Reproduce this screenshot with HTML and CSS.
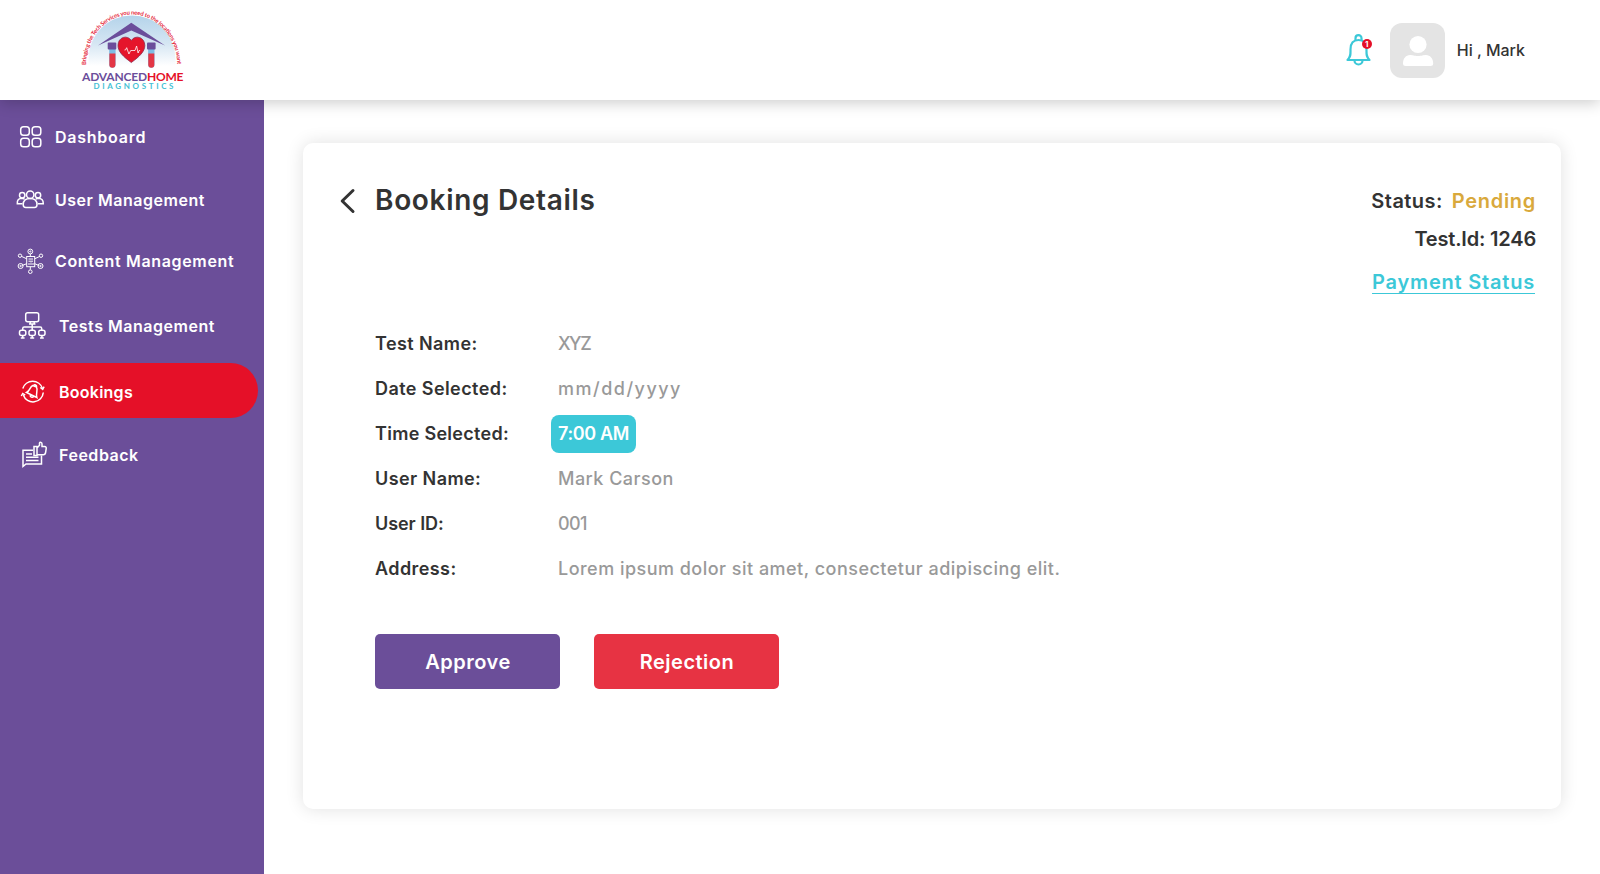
FILE: index.html
```html
<!DOCTYPE html>
<html lang="en">
<head>
<meta charset="utf-8">
<title>Booking Details</title>
<link rel="stylesheet" href="styles.css">
</head>
<body>
<header class="topbar">
  <svg class="logo" width="125" height="100" viewBox="70 0 125 100" role="img" aria-label="Advanced Home Diagnostics">
    <defs>
      <linearGradient id="sky" x1="0" y1="0" x2="0" y2="1"><stop offset="0" stop-color="#b4d3ea"/><stop offset=".55" stop-color="#d5e6f3"/><stop offset="1" stop-color="#fff"/></linearGradient>
      <path id="arc" d="M86 65 A45.600 50.500 0 0 1 177.200 65"/>
    </defs>
    <path d="M88.500 66 V59 A43.500 43.500 0 0 1 175.500 59 V66 Z" fill="url(#sky)"/>
    <text class="logo-motto"><textPath href="#arc" textLength="150">Bringing the Tech Services you need to the locations you want</textPath></text>
    <path d="M98 45.500 L131.300 22.700 L165 45.500 L131.300 30.500 Z" fill="#6b4e9b"/>
    <g>
      <path d="M109.200 49 h6.400 v15.500 a3.200 3.200 0 0 1 -6.400 0z" fill="#7ebce4"/>
      <path d="M109.400 53.500 h6 v11.200 a3 3 0 0 1 -6 0z" fill="#e33645"/>
      <rect x="107.700" y="42.400" width="8.600" height="7" rx="1" fill="#6b4e9b"/>
      <path d="M148.100 49 h6.400 v15.500 a3.200 3.200 0 0 1 -6.400 0z" fill="#7ebce4"/>
      <path d="M148.300 53.500 h6 v11.200 a3 3 0 0 1 -6 0z" fill="#e33645"/>
      <rect x="147" y="42.400" width="8.600" height="7" rx="1" fill="#6b4e9b"/>
    </g>
    <path d="M131.300 62.500 C123 56.500 118 51.500 118 45.500 C118 36.800 127.500 34.500 131.300 40.500 C135.100 34.500 144.800 36.800 144.800 45.500 C144.800 51.500 139.600 56.500 131.300 62.500Z" fill="#e5152b" stroke="#8d2a4c" stroke-width=".8"/>
    <path d="M124.500 50 h1 l1.200 -2.300 l2.200 6.300 l1.800 -3.500 h4.300 l1.600 -4.500 l1.500 7 l1 -2.500 h1" fill="none" stroke="#fff" stroke-width=".8"/>
    <text class="logo-name" x="82" y="81" textLength="101.500"><tspan fill="#6b4e9b">ADVANCED</tspan><tspan fill="#e51029">HOME</tspan></text>
    <text class="logo-sub" x="93.500" y="88.700" textLength="80">DIAGNOSTICS</text>
  </svg>
  <div class="account">
    <div class="bell">
      <svg width="26" height="32" viewBox="0 0 26 32" fill="none" stroke="#3cc8d8" stroke-width="2.200">
        <path d="M1.500 26 C5 22.500 4.500 20 4.500 15.500 C4.500 9 7.500 6 12.500 6 C17.500 6 20.500 9 20.500 15.500 C20.500 20 20 22.500 23.500 26 Z" stroke-linejoin="round"/>
        <path d="M9.500 6.500 V4.200 a3 3 0 0 1 6 0 V6.500"/>
        <path d="M8.500 26.500 a4 4 0 0 0 8 0"/>
      </svg>
      <span class="badge">1</span>
    </div>
    <div class="avatar">
      <svg width="55" height="55" viewBox="0 0 55 55" fill="#fff"><circle cx="28" cy="21.500" r="8.600"/><path d="M13 40.500 C13 35.500 16 32 20 32 C23 32 24 33 28 33 C32 33 33 32 36 32 C40 32 43.200 35.500 43.200 40.500 C43.200 42.200 42.200 43 40.500 43 H15.700 C14 43 13 42.200 13 40.500Z"/></svg>
    </div>
    <span class="greeting">Hi , Mark</span>
  </div>
</header>
<div class="shell">
  <nav class="sidebar">
    <a class="item dashboard">
      <svg width="30" height="30" viewBox="0 0 30 30"><rect x="5.700" y="4.700" width="8.600" height="8.600" rx="2.800"/><rect x="17.200" y="4.700" width="8.600" height="8.600" rx="2.800"/><rect x="5.700" y="16.200" width="8.600" height="8.600" rx="2.800"/><rect x="17.200" y="16.200" width="8.600" height="8.600" rx="2.800"/></svg>
      <span>Dashboard</span></a>
    <a class="item users">
      <svg width="30" height="30" viewBox="0 0 30 30"><circle cx="15.200" cy="9.700" r="3.700"/><circle cx="7.200" cy="10.200" r="2.700"/><circle cx="23" cy="10.200" r="2.700"/><path d="M8.200 19.500 C8.200 15.600 10.500 13.500 15.200 13.500 C19.900 13.500 22 15.600 22 19.500 C22 21.600 21.100 22.500 19.500 22.500 H10.800 C9.200 22.500 8.200 21.600 8.200 19.500Z"/><path d="M7.500 18.700 H2.300 C2 15 3.800 13.200 7.200 13.200 L9.500 14 M22.700 18.700 H28.300 C28.400 15 26.400 13.200 23 13.200 L20.800 14"/></svg>
      <span>User Management</span></a>
    <a class="item content">
      <svg class="fine" width="30" height="30" viewBox="0 0 30 30"><rect x="11.700" y="10.500" width="8" height="10.200"/><path d="M13.500 13 h4.500 M13.500 15.200 h4.500 M14 19 v-2 M16 19 v-2.500 M18 19 v-2 M15.300 8 v2.500 M15.300 20.700 v3 M6.800 10.500 l4.900 2.300 M24.500 10.500 l-4.800 2.300 M7.200 19.500 l4.500 -1.800 M24 19.500 l-4.300 -1.800"/><circle cx="15.300" cy="5.500" r="2.400"/><circle cx="15.300" cy="5.500" r=".6"/><circle cx="5" cy="9.700" r="1.700"/><circle cx="26" cy="9.700" r="1.700"/><circle cx="5.600" cy="20" r="2.500"/><circle cx="5.600" cy="20" r=".7"/><circle cx="25.500" cy="20" r="2.500"/><circle cx="25.500" cy="20" r=".7"/><circle cx="15.300" cy="25.700" r="1.800"/></svg>
      <span>Content Management</span></a>
    <a class="item tests">
      <svg width="30" height="30" viewBox="0 0 30 30"><rect x="8.700" y="1.700" width="13" height="9" rx="2"/><path d="M13.200 10.700 v2.300 h4 v-2.300 M12 13 h6.500 M15.200 13 v6 M5.700 19 v-1.500 a1.500 1.500 0 0 1 1.500 -1.500 h16 a1.500 1.500 0 0 1 1.500 1.500 V19"/><rect x="2.500" y="19.200" width="6.300" height="5.300" rx="2"/><rect x="12" y="19.200" width="6.300" height="5.300" rx="2"/><rect x="21.700" y="19.200" width="6.300" height="5.300" rx="2"/><path d="M5.700 24.500 v2.500 M15.200 24.500 v2.500 M24.900 24.500 v2.500 M3.800 27 h3.800 M13.200 27 h4 M23 27 h3.800"/></svg>
      <span>Tests Management</span></a>
    <a class="item bookings active">
      <svg width="30" height="30" viewBox="0 0 30 30"><path d="M4.800 11.500 A10.300 10.300 0 0 1 24.500 11.500 M25.300 15.500 A10.300 10.300 0 0 1 5.300 18"/><path d="M22.300 10.500 l2.400 1.800 l1.400 -2.600 M3.300 19 l1.400 -2.500 l2.500 1.700"/><path d="M8.500 15.500 C12.500 13.500 11.500 10 14.800 8.500 L18.500 10 C20.300 13.200 17.500 16.500 18.800 20.500 Z M15.600 8.500 a1.700 1.700 0 0 1 3 1.300 M12.200 18.200 a2 2 0 0 0 3.500 1.400"/></svg>
      <span>Bookings</span></a>
    <a class="item feedback">
      <svg width="30" height="30" viewBox="0 0 30 30"><path d="M15 10.300 H5 V26.500 L8 24 H23.500 V15.500"/><path d="M8 14 h6 M8 17.200 h12.500 M8 20.500 h12.500"/><path d="M16 6.500 h3 v9 h-3 z M19 8 L21.500 5.300 V3 C22 1.800 24 2.200 24 4 V6.500 H26.500 C28 6.500 28.400 7.500 28.200 8.700 L27.500 13 C27.200 14.300 26.500 14.700 25.500 14.700 H19"/></svg>
      <span>Feedback</span></a>
  </nav>
  <main class="page">
    <section class="card">
      <div class="card-head">
        <svg class="back" width="18" height="26" viewBox="0 0 18 26"><path d="M14 2.500 L3.200 13 L14 23.500"/></svg>
        <h1>Booking Details</h1>
        <div class="meta">
          <div class="status"><span class="status-label">Status:</span><span class="pending">Pending</span></div>
          <div class="test-id">Test.Id: 1246</div>
          <a class="payment">Payment Status</a>
        </div>
      </div>
      <dl class="details">
        <dt>Test Name:</dt><dd class="xyz">XYZ</dd>
        <dt>Date Selected:</dt><dd class="date">mm/dd/yyyy</dd>
        <dt class="time-label">Time Selected:</dt><dd><span class="time">7:00 AM</span></dd>
        <dt>User Name:</dt><dd>Mark Carson</dd>
        <dt class="id-label">User ID:</dt><dd class="uid">001</dd>
        <dt>Address:</dt><dd>Lorem ipsum dolor sit amet, consectetur adipiscing elit.</dd>
      </dl>
      <div class="actions">
        <button class="btn approve">Approve</button>
        <button class="btn reject">Rejection</button>
      </div>
    </section>
  </main>
</div>
</body>
</html>
```
FILE: styles.css
```css
* { box-sizing: border-box; }
body {
  margin: 0;
  height: 874px;
  overflow: hidden;
  display: flex;
  flex-direction: column;
  background: #fff;
  color: #333;
  font-family: "Inter", "Open Sans", sans-serif;
}
.topbar {
  position: relative;
  z-index: 1;
  flex: none;
  height: 100px;
  padding: 0 75px 0 70px;
  display: flex;
  justify-content: space-between;
  background: #fff;
  box-shadow: 0 3px 14px rgba(0, 0, 0, .2);
}
.logo { display: block; }
.logo text { font-family: "Lato", sans-serif; }
.logo-motto { font-size: 5.8px; font-weight: 700; fill: #e5283c; }
.logo-name { font-size: 12px; font-weight: 700; }
.logo-sub { font-size: 8px; font-weight: 700; fill: #45bfd4; }
.account { display: flex; align-items: center; }
.bell { position: relative; height: 32px; margin-right: 18px; }
.bell svg { display: block; }
.badge {
  position: absolute;
  left: 16px;
  top: 5px;
  width: 10px;
  height: 10px;
  border-radius: 50%;
  background: #e50f28;
  color: #fff;
  font-size: 8px;
  font-weight: 700;
  line-height: 10px;
  text-align: center;
}
.avatar { width: 55px; height: 55px; border-radius: 12px; background: #e4e4e4; }
.avatar svg { display: block; }
.greeting { margin-left: 12px; font-size: 16px; font-weight: 500; white-space: pre; }

.shell { flex: 1; display: flex; min-height: 0; }
.sidebar { width: 264px; padding-top: 10px; background: #6b4e99; }
.item {
  width: 258px;
  height: 55px;
  padding-left: 15px;
  display: flex;
  align-items: center;
  gap: 10px;
  color: #fff;
  font-size: 16px;
  font-weight: 600;
  letter-spacing: .52px;
}
.item svg { flex: none; fill: none; stroke: #fff; stroke-width: 1.5; }
.item svg.fine { stroke-width: 1; }
.dashboard { padding-bottom: 1px; letter-spacing: .75px; }
.users { margin-top: 8px; padding-bottom: 1px; }
.content { margin-top: 5px; letter-spacing: .66px; }
.tests { margin-top: 11px; padding: 0 0 1px 17px; gap: 12px; }
.bookings { margin-top: 9px; padding: 3px 0 0 18px; gap: 11px; letter-spacing: .25px; }
.feedback { margin-top: 10px; padding: 0 0 1px 18px; gap: 11px; }
.active { background: #e51028; border-radius: 0 28px 28px 0; }

.page { flex: 1; padding: 43px 39px 64px; }
.card {
  height: 666px;
  padding: 42px 25px 0 36px;
  border-radius: 10px;
  background: #fff;
  box-shadow: 0 0 18px rgba(0, 0, 0, .12);
}
.card-head { display: flex; align-items: flex-start; height: 136px; }
.back { flex: none; margin-top: 3px; fill: none; stroke: #333; stroke-width: 3; stroke-linecap: round; stroke-linejoin: round; }
h1 {
  margin: 0 0 0 18px;
  font-size: 28px;
  font-weight: 600;
  line-height: 30px;
  letter-spacing: .68px;
}
.meta {
  margin: 1px 0 0 auto;
  display: flex;
  flex-direction: column;
  align-items: flex-end;
  font-size: 20px;
  font-weight: 600;
  line-height: 30px;
}
.status { display: flex; gap: 9px; }
.status-label { letter-spacing: .45px; }
.pending { color: #d9a93c; letter-spacing: .7px; }
.test-id { margin-top: 8px; letter-spacing: -.19px; }
.payment {
  margin: 13px 1px 0 0;
  color: #3cc8d8;
  letter-spacing: .8px;
  text-decoration: underline;
  text-decoration-thickness: 1px;
  text-underline-offset: 4px;
}
.details {
  margin: 0 0 0 36px;
  display: grid;
  grid-template-columns: 183px 1fr;
  grid-auto-rows: 45px;
  align-items: center;
  font-size: 18px;
  letter-spacing: .48px;
}
dt { font-weight: 600; letter-spacing: .42px; }
dd { margin: 0; color: #999; font-weight: 500; }
.time-label { letter-spacing: .29px; }
.id-label { letter-spacing: -.06px; }
.xyz { letter-spacing: -1.5px; }
.date { letter-spacing: 1.5px; }
.uid { letter-spacing: -.6px; }
.time {
  display: inline-block;
  width: 85px;
  height: 38px;
  margin-left: -7px;
  border-radius: 8px;
  background: #3cc8d8;
  color: #fff;
  font-weight: 600;
  line-height: 38px;
  letter-spacing: -.35px;
  text-align: center;
  vertical-align: middle;
}
.actions { display: flex; gap: 34px; margin: 43px 0 0 36px; }
.btn {
  width: 185px;
  height: 55px;
  padding: 0 0 0 1px;
  border: 0;
  border-radius: 5px;
  color: #fff;
  font: 600 20px "Inter", sans-serif;
  letter-spacing: .5px;
}
.approve { background: #6b4e99; }
.reject { background: #e73343; }
```
